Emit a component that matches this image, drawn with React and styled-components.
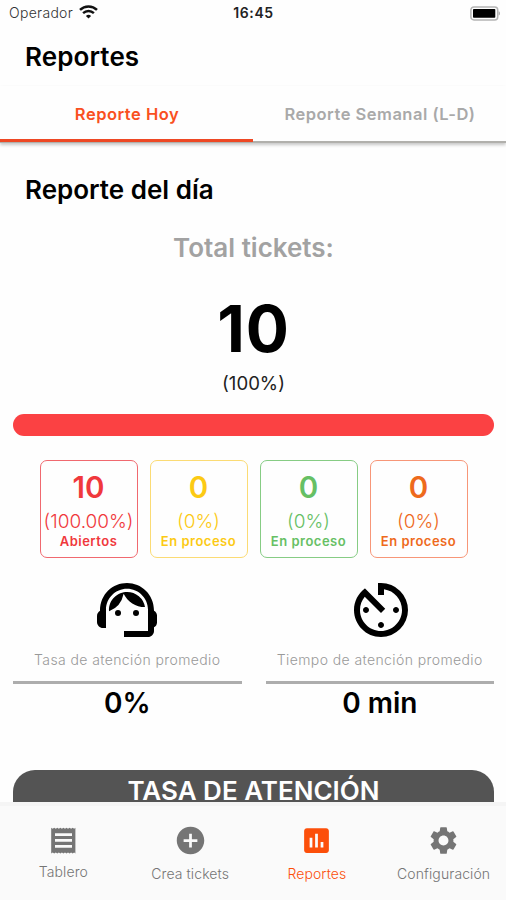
import { useState } from "react";
import styled, { createGlobalStyle } from "styled-components";
import {
  MdAddCircle,
  MdAssessment,
  MdAvTimer,
  MdSettings,
  MdSupportAgent,
} from "react-icons/md";

const ReceiptIcon = ({ size }) => (
  <svg width={size} height={size} viewBox="0 0 33 33" fill="currentColor">
    <path
      fillRule="evenodd"
      d="M4.2 3.8l1.5.9 1.5-.9 1.6.9 1.5-.9 1.5.9 1.6-.9 1.5.9 1.5-.9 1.6.9 1.5-.9 1.5.9 1.6-.9 1.5.9 1.5-.9 1.6.9 1.2-.9v25.6l-1.2-.9-1.6.9-1.5-.9-1.5.9-1.6-.9-1.5.9-1.5-.9-1.6.9-1.5-.9-1.5.9-1.6-.9-1.5.9-1.5-.9-1.6.9-1.5-.9-1.5.9zM8 9.2v2.8h17V9.2zM8 15v2.8h17V15zM8 20.9v2.8h17v-2.8z"
    />
  </svg>
);

const WifiIcon = () => (
  <svg width="19" height="14" viewBox="0 0 19 14" fill="none" stroke="#111">
    <path d="M1 4.9a12.2 12.2 0 0 1 17 0" strokeWidth="2.5" />
    <path d="M4.1 8.1a7.8 7.8 0 0 1 10.8 0" strokeWidth="2.4" />
    <path d="M9.5 13.6 6.9 11a3.8 3.8 0 0 1 5.2 0z" fill="#111" stroke="none" />
  </svg>
);

const BatteryIcon = () => (
  <svg width="31" height="15" viewBox="0 0 31 15">
    <rect x="0.9" y="0.9" width="26.8" height="13" rx="3" fill="#fff" stroke="#b4b4b4" strokeWidth="1.5" />
    <rect x="3" y="3" width="22.3" height="8.8" rx="0.8" fill="#000" />
    <path d="M28.6 5.2c1.8.6 1.8 3.8 0 4.4z" fill="#aaa" />
  </svg>
);

const tabs = ["Reporte Hoy", "Reporte Semanal (L-D)"];

const statuses = [
  { id: 1, count: 10, percent: "100.00%", label: "Abiertos", color: "#f0383c", border: "#f0696f" },
  { id: 2, count: 0, percent: "0%", label: "En proceso", color: "#fcca14", border: "#fbdb74" },
  { id: 3, count: 0, percent: "0%", label: "En proceso", color: "#66c064", border: "#86cc84" },
  { id: 4, count: 0, percent: "0%", label: "En proceso", color: "#ee6a1c", border: "#f79678" },
];

const averages = [
  { label: "Tasa de atención promedio", value: "0%", icon: MdSupportAgent },
  { label: "Tiempo de atención promedio", value: "0 min", icon: MdAvTimer },
];

const navItems = [
  { label: "Tablero", icon: ReceiptIcon, raised: true },
  { label: "Crea tickets", icon: MdAddCircle },
  { label: "Reportes", icon: MdAssessment },
  { label: "Configuración", icon: MdSettings },
];

const App = () => {
  const [activeTab, setActiveTab] = useState(0);
  const [activeNav, setActiveNav] = useState("Reportes");

  return (
    <>
      <GlobalStyle />
      <Screen>
        <StatusBar>
          <Carrier>
            Operador
            <WifiIcon />
          </Carrier>
          <Clock>16:45</Clock>
          <BatteryIcon />
        </StatusBar>

        <Title>Reportes</Title>

        <Tabs>
          {tabs.map((tab, index) => (
            <Tab
              key={tab}
              $active={index === activeTab}
              onClick={() => setActiveTab(index)}
            >
              {tab}
            </Tab>
          ))}
        </Tabs>

        <Content>
          <Subtitle>Reporte del día</Subtitle>
          <TotalLabel>Total tickets:</TotalLabel>
          <Total>10</Total>
          <TotalPercent>(100%)</TotalPercent>
          <Progress />

          <Cards>
            {statuses.map(({ id, count, percent, label, color, border }) => (
              <Card key={id} $color={color} $border={border}>
                <CardCount>{count}</CardCount>
                <CardPercent>({percent})</CardPercent>
                <CardLabel>{label}</CardLabel>
              </Card>
            ))}
          </Cards>

          <Averages>
            {averages.map(({ label, value, icon: Icon }) => (
              <Average key={label}>
                <Icon size={72} />
                <AverageLabel>{label}</AverageLabel>
                <AverageValue>{value}</AverageValue>
              </Average>
            ))}
          </Averages>

          <Banner>TASA DE ATENCIÓN</Banner>
        </Content>

        <BottomNav>
          {navItems.map(({ label, icon: Icon, raised }) => (
            <NavItem
              key={label}
              $active={label === activeNav}
              $raised={raised}
              onClick={() => setActiveNav(label)}
            >
              <Icon size={33} />
              <span>{label}</span>
            </NavItem>
          ))}
        </BottomNav>
      </Screen>
    </>
  );
};

const GlobalStyle = createGlobalStyle`
  * {
    box-sizing: border-box;
  }

  body {
    margin: 0;
    background: #fefefe;
    font-family: Inter, "Liberation Sans", sans-serif;
    color: #000;
  }

  button {
    border: 0;
    padding: 0;
    background: none;
    font: inherit;
    cursor: pointer;
  }
`;

const Screen = styled.div`
  width: 506px;
  height: 900px;
  display: flex;
  flex-direction: column;
  overflow: hidden;
  background: #fefefe;
  white-space: nowrap;
`;

const StatusBar = styled.header`
  height: 26px;
  flex-shrink: 0;
  padding: 0 5px 0 9px;
  display: grid;
  grid-template-columns: 1fr auto 1fr;
  align-items: center;

  > svg {
    justify-self: end;
  }
`;

const Carrier = styled.div`
  display: flex;
  align-items: center;
  gap: 6px;
  font-size: 14px;
  font-weight: 300;
  line-height: 16px;
  color: #333;
  letter-spacing: 0.3px;

  svg {
    margin-top: -2px;
  }
`;

const Clock = styled.div`
  margin-right: 3px;
  font-size: 14px;
  font-weight: 600;
  line-height: 16px;
  color: #222;
  letter-spacing: 0.6px;
`;

const Title = styled.h1`
  margin: 15px 0 0 25px;
  flex-shrink: 0;
  font-size: 26px;
  font-weight: 600;
  line-height: 32px;
  letter-spacing: 0.1px;
`;

const Tabs = styled.div`
  height: 57px;
  margin-top: 13px;
  flex-shrink: 0;
  display: flex;
  border-bottom: 2px solid #b1b0ac;
  box-shadow: 0 2px 3px rgba(0, 0, 0, 0.22);
`;

const Tab = styled.button`
  flex: 1;
  margin-bottom: -1px;
  padding-top: 2px;
  padding-left: 1px;
  font-size: 16.5px;
  font-weight: 600;
  letter-spacing: 0.5px;
  color: ${({ $active }) => ($active ? "#f9501f" : "#a9a9a9")};
  border-bottom: 3px solid ${({ $active }) => ($active ? "#ee4824" : "transparent")};
`;

const Content = styled.main`
  flex: 1;
  min-height: 0;
  padding: 31px 12px 0 13px;
  text-align: center;
`;

const Subtitle = styled.h2`
  margin: 0 0 0 12px;
  font-size: 26px;
  font-weight: 600;
  line-height: 32px;
  text-align: left;
`;

const TotalLabel = styled.div`
  margin-top: 26px;
  font-size: 26px;
  font-weight: 600;
  line-height: 32px;
  color: #a2a2a2;
`;

const Total = styled.div`
  margin-top: 25px;
  font-size: 64px;
  font-weight: 700;
  line-height: 80px;
  letter-spacing: 0.8px;
`;

const TotalPercent = styled.div`
  margin-top: 2px;
  font-size: 18.6px;
  line-height: 24px;
  color: #222;
`;

const Progress = styled.div`
  height: 22px;
  margin-top: 19px;
  border-radius: 11px;
  background: #fb4143;
`;

const Cards = styled.div`
  display: flex;
  justify-content: center;
  gap: 12px;
  margin-top: 24px;
`;

const Card = styled.div`
  width: 98px;
  height: 98px;
  padding-top: 8px;
  display: flex;
  flex-direction: column;
  align-items: center;
  border: 1.5px solid ${({ $border }) => $border};
  border-radius: 7px;
  color: ${({ $color }) => $color};
`;

const CardCount = styled.div`
  font-size: 29.5px;
  font-weight: 600;
  line-height: 36px;
`;

const CardPercent = styled.div`
  margin-top: 5px;
  font-size: 19px;
  font-weight: 300;
  line-height: 24px;
`;

const CardLabel = styled.div`
  margin-top: -1px;
  font-size: 13px;
  font-weight: 600;
  line-height: 16px;
  letter-spacing: 0.5px;
`;

const Averages = styled.div`
  display: grid;
  grid-template-columns: 1fr 1fr;
  gap: 24px;
  margin-top: 16px;
`;

const Average = styled.div`
  display: flex;
  flex-direction: column;
  align-items: center;

  &:last-child svg {
    margin-left: 2px;
  }
`;

const AverageLabel = styled.div`
  width: 100%;
  height: 38px;
  padding-top: 4px;
  font-size: 14px;
  font-weight: 300;
  line-height: 20px;
  letter-spacing: 0.4px;
  color: #999;
  border-bottom: 3px solid #adadad;
`;

const AverageValue = styled.div`
  margin-top: 1px;
  font-size: 28px;
  font-weight: 600;
  line-height: 36px;
`;

const Banner = styled.div`
  height: 32px;
  margin-top: 49px;
  padding-top: 10px;
  border-radius: 22px 22px 0 0;
  background: #545454;
  color: #fff;
  font-size: 26px;
  font-weight: 600;
  line-height: 22px;
`;

const BottomNav = styled.nav`
  height: 98px;
  margin-right: -1px;
  flex-shrink: 0;
  display: flex;
  background: #fafafa;
  border-top: 4px solid #f5f5f5;
`;

const NavItem = styled.button`
  flex: 1;
  display: flex;
  flex-direction: column;
  align-items: center;
  padding-top: 18px;
  color: ${({ $active }) => ($active ? "#fc4f0a" : "#757575")};

  span {
    margin-top: ${({ $raised }) => ($raised ? "5px" : "7px")};
    font-size: 14px;
    font-weight: 300;
    line-height: 20px;
    letter-spacing: 0.1px;
  }
`;

export default App;
